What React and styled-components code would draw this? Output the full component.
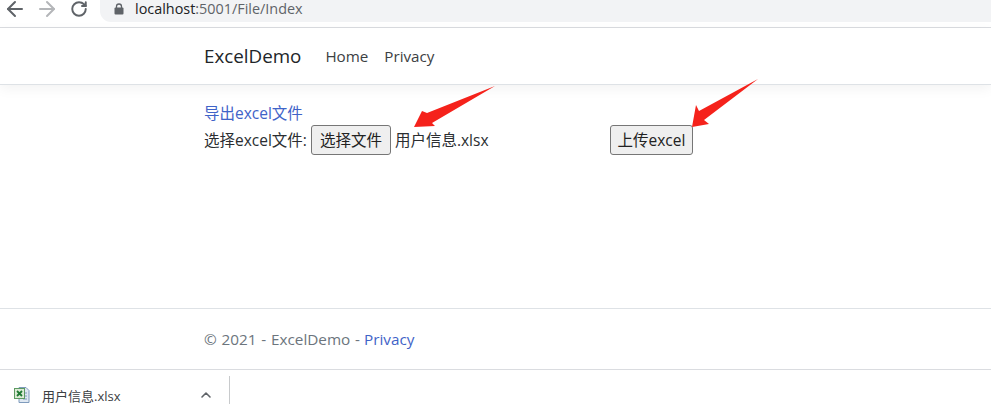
import React from "react";
import styled, { createGlobalStyle } from "styled-components";
import { ArrowLeft, ArrowRight, RotateCw, ChevronUp } from "lucide-react";

const FONT = `"Open Sans", "Noto Sans CJK SC", sans-serif`;

const GlobalStyle = createGlobalStyle`
  html, body { margin: 0; padding: 0; background: #fff; }
  body { width: 995px; height: 404px; overflow: hidden; font-family: ${FONT}; }
`;

const Page = styled.div`
  position: relative;
  width: 991px;
  height: 404px;
  display: flex;
  flex-direction: column;
  overflow: hidden;
`;

const Toolbar = styled.div`
  height: 27px;
  display: flex;
  align-items: flex-start;
  padding-left: 3px;
  border-bottom: 1px solid #dadce0;
  flex: none;
`;

const NavIcon = styled.span`
  display: flex;
  margin-top: ${(p) => p.$top}px;
  margin-right: ${(p) => p.$gap}px;
  color: ${(p) => p.$color};
`;

const AddressBar = styled.div`
  flex: 1;
  height: 22px;
  padding-left: 14px;
  box-sizing: border-box;
  display: flex;
  align-items: center;
  gap: 11px;
  background: #f2f3f5;
  border-radius: 0 0 0 11px;
`;

const Url = styled.span`
  font-size: 14.4px;
  line-height: 18px;
  margin-top: -4px;
  color: #5f6368;
  b { font-weight: 400; color: #202124; }
`;

const Navbar = styled.nav`
  height: 56px;
  flex: none;
  display: flex;
  align-items: center;
  padding-left: 204px;
  border-bottom: 1px solid #dee2e6;
  box-shadow: 0 4px 12px rgba(0, 0, 0, 0.05);
`;

const Brand = styled.span`
  font-size: 18.8px;
  color: #212529;
  margin-right: 24px;
`;

const NavLink = styled.span`
  font-size: 15.2px;
  color: #3c4043;
  margin-right: 16px;
`;

const Main = styled.main`
  flex: 1;
  padding: 18px 0 0 204px;
  font-size: 15.5px;
  color: #2b2e31;
`;

const ExportLink = styled.div`
  height: 20px;
  line-height: 20px;
  color: #3f63c8;
`;

const UploadRow = styled.div`
  display: flex;
  align-items: center;
  height: 30px;
  line-height: 28px;
  margin-top: 2px;
`;

const FileButton = styled.span`
  display: inline-flex;
  align-items: center;
  justify-content: center;
  box-sizing: border-box;
  height: 30px;
  width: ${(p) => p.$width}px;
  margin-left: ${(p) => p.$left}px;
  border: 1px solid #767676;
  border-radius: 3px;
  background: #efefef;
  color: #222;
`;

const FileName = styled.span`
  width: 215px;
  margin-left: 4px;
`;

const Footer = styled.footer`
  height: 60px;
  flex: none;
  display: flex;
  align-items: center;
  padding-left: 204px;
  border-top: 1px solid #dee2e6;
  font-size: 15.3px;
  word-spacing: 0.8px;
  color: #6c757d;
  a { color: #3f63c8; margin-left: 4px; }
`;

const DownloadBar = styled.div`
  height: 34px;
  flex: none;
  display: flex;
  border-top: 1px solid #dadce0;
  font-size: 13px;
  color: #3c4043;
`;

const DownloadItem = styled.div`
  width: 230px;
  height: 28px;
  margin-top: 6px;
  padding: 10px 0 0 14px;
  box-sizing: border-box;
  display: flex;
  align-items: center;
  border-right: 1px solid #c8cacc;
`;

const ItemName = styled.span`
  width: 156px;
  margin-left: 12px;
`;

const Arrows = styled.svg`
  position: absolute;
  left: 0;
  top: 0;
  pointer-events: none;
`;

const LockIcon = () => (
  <svg width="10" height="12" viewBox="0 0 10 12" style={{ marginTop: -4 }}>
    <path d="M2.5 5V3.5a2.5 2.5 0 0 1 5 0V5" fill="none" stroke="#5f6368" strokeWidth="1.3" />
    <rect x="0.5" y="4.5" width="9" height="7" rx="1" fill="#5f6368" />
  </svg>
);

const SheetIcon = () => (
  <svg width="16" height="16" viewBox="0 0 16 16">
    <path d="M5 .5h7l3 3v12H5z" fill="#dfe8f2" stroke="#7f9bbc" />
    <path d="M9 6h4M9 9h4M9 12h4" stroke="#7f9bbc" />
    <rect x=".5" y="1.5" width="10" height="10" fill="#dcebd6" stroke="#5d9a62" />
    <path d="M3 4l5 5M8 4l-5 5" stroke="#1f7a33" strokeWidth="1.8" />
  </svg>
);

export default function App() {
  return (
    <Page>
      <GlobalStyle />
      <Toolbar>
        <NavIcon $color="#5f6368" $gap={8} $top={-3}>
          <ArrowLeft size={24} strokeWidth={2} />
        </NavIcon>
        <NavIcon $color="#b4b6b9" $gap={11} $top={-3}>
          <ArrowRight size={24} strokeWidth={2} />
        </NavIcon>
        <NavIcon $color="#5f6368" $gap={12} $top={0}>
          <RotateCw size={18} strokeWidth={2.6} />
        </NavIcon>
        <AddressBar>
          <LockIcon />
          <Url>
            <b>localhost</b>:5001/File/Index
          </Url>
        </AddressBar>
      </Toolbar>
      <Navbar>
        <Brand>ExcelDemo</Brand>
        <NavLink>Home</NavLink>
        <NavLink>Privacy</NavLink>
      </Navbar>
      <Main>
        <ExportLink>导出excel文件</ExportLink>
        <UploadRow>
          选择excel文件:
          <FileButton $width={80} $left={4}>选择文件</FileButton>
          <FileName>用户信息.xlsx</FileName>
          <FileButton $width={83} $left={0}>上传excel</FileButton>
        </UploadRow>
      </Main>
      <Footer>
        © 2021 - ExcelDemo - <a>Privacy</a>
      </Footer>
      <DownloadBar>
        <DownloadItem>
          <SheetIcon />
          <ItemName>用户信息.xlsx</ItemName>
          <ChevronUp size={16} color="#5f6368" strokeWidth={2.4} />
        </DownloadItem>
      </DownloadBar>
      <Arrows width="991" height="404" viewBox="0 0 991 404">
        <path d="M495 86L427 113L422 111L414 127L435 126L432 123Z" fill="#f5221b" />
        <path d="M758 79L699 111L696 105L692 127L709 124L704 120Z" fill="#f5221b" />
      </Arrows>
    </Page>
  );
}
